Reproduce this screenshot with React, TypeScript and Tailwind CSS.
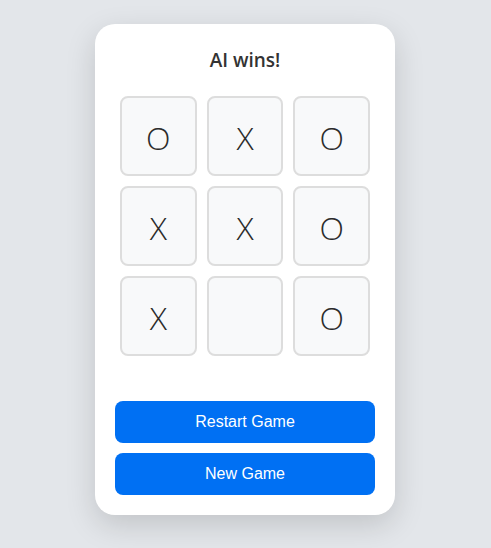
import React from 'react';

const board = ['O', 'X', 'O', 'X', 'X', 'O', 'X', '', 'O'];

const App: React.FC = () => {
  return (
    <div className="min-h-screen w-full bg-[#e3e6ea] flex justify-center pt-6 pr-px" style={{ fontFamily: '"Open Sans", sans-serif' }}>
      <div className="w-[300px] h-[491px] bg-white rounded-[20px] shadow-[0_10px_30px_rgba(0,0,0,0.15)] px-5 pt-5 flex flex-col">
        <h2 className="text-center text-[19px] leading-8 font-semibold text-[#333] mb-5">AI wins!</h2>
        <div className="grid grid-cols-3 gap-[10px] w-[250px] mx-auto">
          {board.map((cell, i) => (
            <div
              key={i}
              className="h-20 flex items-center justify-center pt-1 bg-[#f8f9fa] border-2 border-[#dddddd] rounded-lg text-[32px] font-[350] text-[#2b2b2b]"
            >
              {cell}
            </div>
          ))}
        </div>
        <div className="mt-[45px] flex flex-col gap-[10px]" style={{ fontFamily: '"Liberation Sans", Arial, sans-serif' }}>
          <button className="h-[42px] w-full bg-[#0070f3] text-white text-base rounded-lg">Restart Game</button>
          <button className="h-[42px] w-full bg-[#0070f3] text-white text-base rounded-lg">New Game</button>
        </div>
      </div>
    </div>
  );
};

export default App;
